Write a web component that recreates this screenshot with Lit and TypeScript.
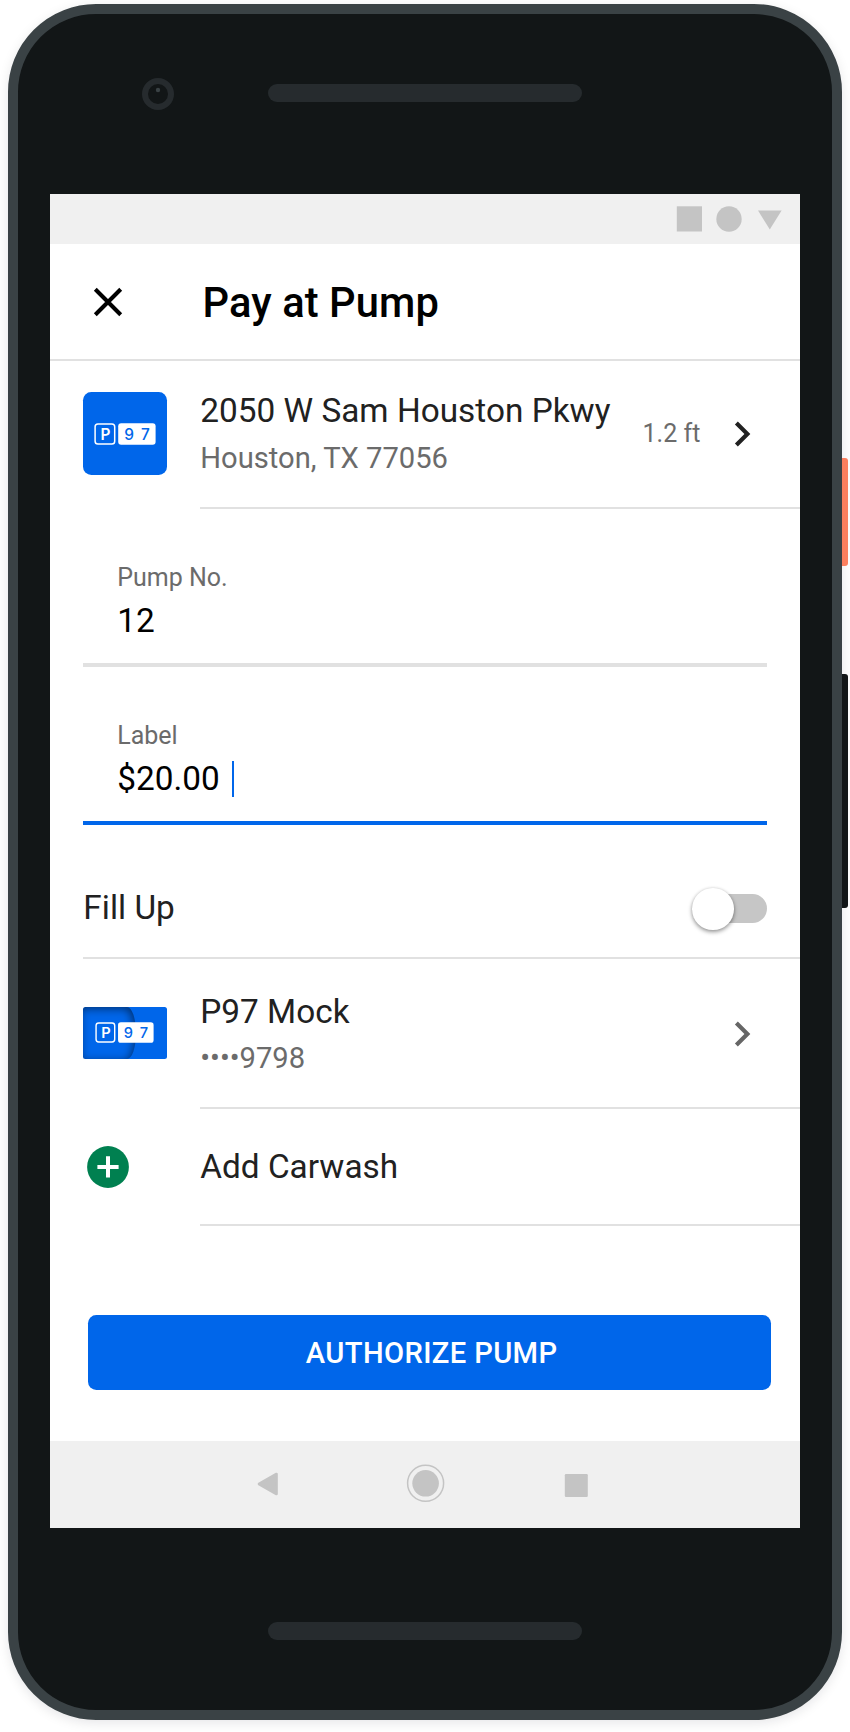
import { LitElement, html, css, svg } from "lit";
import { customElement, property } from "lit/decorators.js";

@customElement("p97-mark")
class P97Mark extends LitElement {
  @property({ type: Number }) width = 62;

  static styles = css`
    :host { display: block; line-height: 0; }
    text { font-family: Inter, "Open Sans", sans-serif; font-weight: 500; font-size: 15.4px; }
    .letter { font-weight: 600; }
  `;

  render() {
    return html`<svg width=${this.width} height=${(this.width * 22) / 62} viewBox="0 0 62 22">
      <rect x="1.1" y="1" width="19.6" height="20" rx="2.8" fill="none" stroke="#fff" stroke-width="1.5" />
      <rect x="24.2" y="0.2" width="37.4" height="21.6" rx="3" fill="#fff" />
      <text class="letter" x="6.6" y="16.8" fill="#fff">P</text>
      <text x="30.2" y="16.8" fill="#0066ea">9</text>
      <text x="47" y="16.8" fill="#0066ea">7</text>
    </svg>`;
  }
}

const chevron = svg`<path d="M10 6 8.59 7.41 13.17 12l-4.58 4.59L10 18l6-6z" fill="currentColor" />`;

@customElement("app-root")
class AppRoot extends LitElement {
  static styles = css`
    :host {
      display: block;
      width: 850px;
      height: 1732px;
      overflow: hidden;
      background: #fff;
      font-family: Roboto, sans-serif;
      color: #212121;
    }
    * { box-sizing: border-box; }
    svg { display: block; flex: none; }
    .device { display: flex; align-items: flex-start; padding: 4px 0 0 8px; }
    .body {
      width: 834px;
      height: 1716px;
      border: 10px solid #3a4245;
      border-radius: 88px;
      background: #121617;
      box-shadow: 0 3px 12px rgba(0, 0, 30, 0.1);
      padding: 0 32px;
      flex: none;
    }
    .side { display: flex; flex-direction: column; padding-top: 454px; gap: 108px; }
    .key { width: 6px; border-radius: 0 3px 3px 0; }
    .power { height: 108px; background: #fb7f5e; }
    .volume { height: 234px; background: #121617; }
    .bezel { height: 180px; display: flex; align-items: flex-start; padding: 64px 0 0 92px; }
    .speaker { width: 314px; height: 18px; border-radius: 9px; background: #262b2e; }
    .bezel .speaker { margin: 6px 0 0 94px; }
    .chin { padding: 94px 0 0 218px; }

    .screen { width: 750px; height: 1334px; background: #fff; display: flex; flex-direction: column; }
    .status { height: 50px; background: #f0f0f0; display: flex; justify-content: flex-end; }
    .header { height: 114.6px; display: flex; align-items: center; padding: 2px 0 0 33.33px; gap: 69.27px; }
    h1 { margin: 1px 0 0; font-size: 41.67px; font-weight: 500; line-height: 50px; color: #000; letter-spacing: 0.08px; }
    .rule { height: 2px; background: #e1e1e1; flex: none; }
    .inset { margin-left: 150px; }
    .edge { margin-left: 33.33px; }
    .row { display: flex; align-items: center; padding: 0 33.1px 0 33.33px; flex: none; }
    .lead { width: 116.9px; flex: none; }
    .station { height: 146px; }
    .wallet { height: 148px; }
    .wash { height: 115px; }
    .copy { flex: 1; padding-top: 2px; white-space: nowrap; }
    .primary { font-size: 33.33px; line-height: 47px; letter-spacing: 0.02px; }
    .secondary { font-size: 29.17px; line-height: 47px; color: #6b6b6b; }
    .station .primary { padding-bottom: 0.5px; }
    .wallet .copy { padding-top: 4px; }
    .wallet svg { margin-top: 2px; }
    .distance { font-size: 25px; line-height: 30px; color: #6b6b6b; margin-right: 16.6px; }
    .muted { color: #666; }
    .brand {
      width: 83.33px;
      height: 83.33px;
      border-radius: 8.3px;
      background: #0066ea;
      display: flex;
      align-items: center;
      justify-content: center;
    }
    .card {
      width: 83.33px;
      height: 52px;
      border-radius: 2.5px;
      background: #0066ea;
      display: grid;
      overflow: hidden;
    }
    .card > * { grid-area: 1 / 1; }
    .shade {
      width: 53px;
      border-radius: 0 9px 9px 0 / 0 26px 26px 0;
      box-shadow: inset -2px 2px 8px rgba(0, 0, 0, 0.5);
    }
    .card p97-mark { place-self: center; }

    .field { margin: 0 33.33px; padding-left: 33.9px; border-bottom: 4px solid #e1e1e1; flex: none; }
    .pump { height: 158px; padding-top: 54px; }
    .amount { height: 158.6px; padding-top: 54.4px; border-color: #0066ea; }
    .label { font-size: 25px; line-height: 30px; color: #6b6b6b; }
    .value { font-size: 33.33px; line-height: 56px; color: #000; display: flex; align-items: center; }
    .caret { width: 2px; height: 36px; background: #0066ea; margin-left: 12px; }

    .fill { height: 131.4px; justify-content: space-between; align-items: flex-start; }
    .fill .primary { line-height: 166px; }
    .switch {
      width: 75px;
      height: 29px;
      margin-top: 69px;
      border-radius: 15px;
      background: #c6c6c6;
      display: flex;
      align-items: center;
    }
    .knob {
      width: 41.67px;
      height: 41.67px;
      border-radius: 50%;
      background: #fff;
      flex: none;
      box-shadow: 0 2px 4px rgba(0, 0, 0, 0.4), 0 0 3px rgba(0, 0, 0, 0.1);
    }
    .wash .copy { padding: 0; }
    .wash svg { margin-top: 2px; }
    .action { flex: 1; padding: 89.8px 29.2px 0 37.5px; }
    button {
      display: block;
      width: 100%;
      height: 75px;
      border: 0;
      border-radius: 8.3px;
      background: #0066ea;
      color: #fff;
      font: 500 29.17px/73px Roboto, sans-serif;
      letter-spacing: 0.37px;
      padding: 2px 0 0 5px;
    }
    .nav { height: 87.5px; background: #f0f0f0; flex: none; display: flex; }
  `;

  render() {
    return html`<div class="device">
      <div class="body">
        <div class="bezel">
          <svg width="32" height="32">
            <circle cx="16" cy="16" r="13" fill="none" stroke="#262b2e" stroke-width="6" />
            <circle cx="16" cy="12" r="2.2" fill="#3a4245" />
          </svg>
          <div class="speaker"></div>
        </div>
        <div class="screen">
          <div class="status">
            <svg width="130" height="50" fill="#c4c4c4">
              <rect x="6.8" y="12.3" width="25.2" height="25.2" />
              <circle cx="59" cy="25" r="12.7" />
              <path d="M88 16.5h23.6L99.8 35.6z" />
            </svg>
          </div>
          <div class="header">
            <svg width="50" height="50" viewBox="0 0 24 24">
              <path d="M5.9 5.9 18.1 18.1M18.1 5.9 5.9 18.1" stroke="#000" stroke-width="1.95" />
            </svg>
            <h1>Pay at Pump</h1>
          </div>
          <div class="rule"></div>
          <div class="row station">
            <div class="lead"><div class="brand"><p97-mark .width=${62}></p97-mark></div></div>
            <div class="copy">
              <div class="primary">2050 W Sam Houston Pkwy</div>
              <div class="secondary">Houston, TX 77056</div>
            </div>
            <div class="distance">1.2 ft</div>
            <svg width="50" height="50" viewBox="0 0 24 24">${chevron}</svg>
          </div>
          <div class="rule inset"></div>
          <div class="field pump">
            <div class="label">Pump No.</div>
            <div class="value">12</div>
          </div>
          <div class="field amount">
            <div class="label">Label</div>
            <div class="value">$20.00<span class="caret"></span></div>
          </div>
          <div class="row fill">
            <div class="primary">Fill Up</div>
            <div class="switch"><div class="knob"></div></div>
          </div>
          <div class="rule edge"></div>
          <div class="row wallet">
            <div class="lead">
              <div class="card"><div class="shade"></div><p97-mark .width=${59}></p97-mark></div>
            </div>
            <div class="copy">
              <div class="primary">P97 Mock</div>
              <div class="secondary">••••9798</div>
            </div>
            <svg class="muted" width="50" height="50" viewBox="0 0 24 24">${chevron}</svg>
          </div>
          <div class="rule inset"></div>
          <div class="row wash">
            <div class="lead">
              <svg width="50" height="50">
                <circle cx="25" cy="25" r="20.9" fill="#008050" />
                <path d="M25 14.3v21.2M14.4 25h21.2" stroke="#fff" stroke-width="4" />
              </svg>
            </div>
            <div class="copy"><div class="primary">Add Carwash</div></div>
          </div>
          <div class="rule inset"></div>
          <div class="action"><button>AUTHORIZE PUMP</button></div>
          <div class="nav">
            <svg width="750" height="87" fill="#c4c4c4">
              <path d="M209 43 226.5 33v20z" stroke="#c4c4c4" stroke-width="2.6" stroke-linejoin="round" />
              <circle cx="375.6" cy="42.3" r="18" fill="none" stroke="#c4c4c4" stroke-width="1.5" />
              <circle cx="375.6" cy="42.3" r="13.3" />
              <rect x="514.8" y="33" width="23" height="23" rx="1.2" />
            </svg>
          </div>
        </div>
        <div class="chin"><div class="speaker"></div></div>
      </div>
      <div class="side">
        <div class="key power"></div>
        <div class="key volume"></div>
      </div>
    </div>`;
  }
}
